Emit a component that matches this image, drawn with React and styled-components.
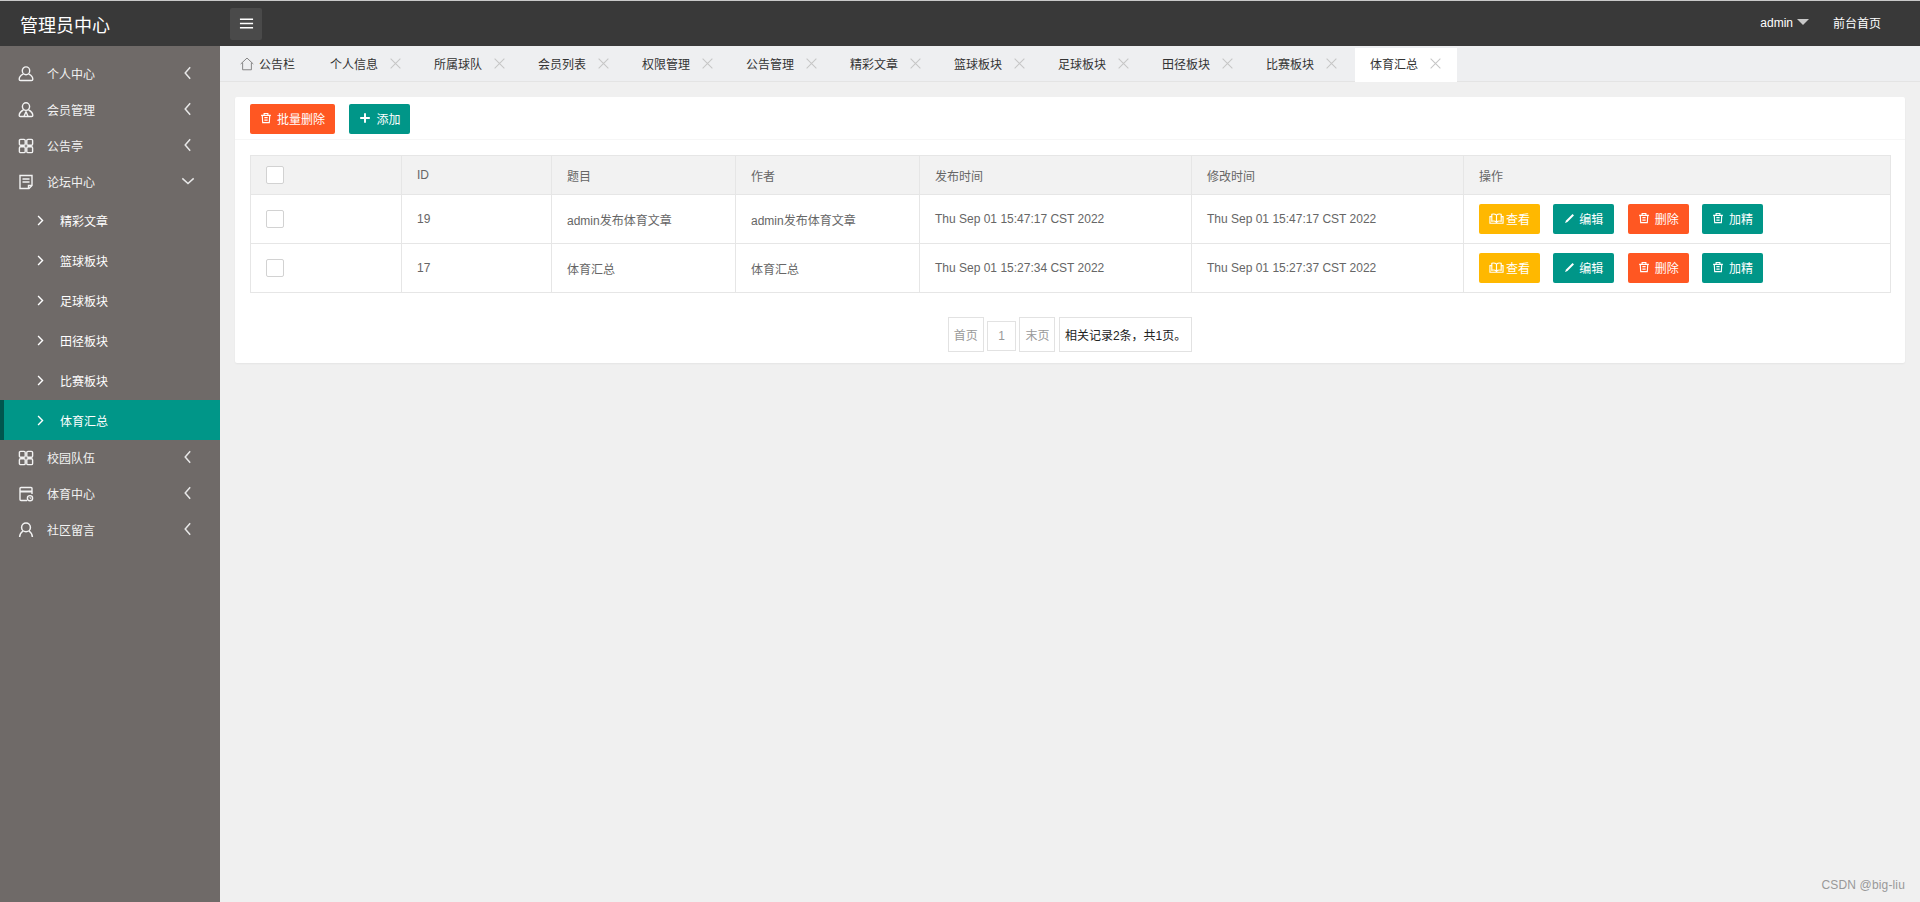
import React from "react";
import styled, { createGlobalStyle } from "styled-components";

const GlobalStyle = createGlobalStyle`
  html, body { margin: 0; padding: 0; height: 100%; overflow: hidden; }
  body {
    font-family: "Liberation Sans", "Noto Sans CJK SC", sans-serif;
    font-size: 12px;
    background: #f0f0f0;
  }
  * { box-sizing: border-box; }
`;

const Svg = ({ size = 16, children, stroke = "currentColor", width = 1.3 }) => (
  <svg width={size} height={size} viewBox="0 0 16 16" fill="none" stroke={stroke} strokeWidth={width} style={{ display: "block", flex: "none" }}>
    {children}
  </svg>
);

const UserIcon = () => (
  <Svg width={1.4}>
    <ellipse cx="8" cy="4.8" rx="3.7" ry="3.9" />
    <path d="M5.3 8.2C3 9.2 1.200 10.800 1.200 13.200c0 .9.5 1.300 1.300 1.300h11c.8 0 1.300-.4 1.300-1.300 0-2.400-1.800-4-4.100-5" />
  </Svg>
);
const MemberIcon = () => (
  <Svg width={1.4}>
    <ellipse cx="8" cy="4.6" rx="3.6" ry="3.8" />
    <path d="M5.4 8C3 9.200 1.200 10.800 1.200 13.400c0 .7.4 1.100 1.100 1.100h11.400c.7 0 1.100-.4 1.100-1.100 0-2.600-1.800-4.200-4.200-5.400" />
    <path d="M8 9.600 6 14.400M8 9.600l2 4.800" />
  </Svg>
);
const GridIcon = () => (
  <Svg width={1.4}>
    <rect x="1.400" y="1.400" width="5.800" height="5.800" rx="1.200" />
    <rect x="8.800" y="1.400" width="5.800" height="5.800" rx="1.200" />
    <rect x="1.400" y="8.800" width="5.800" height="5.800" rx="1.200" />
    <rect x="8.800" y="8.800" width="5.800" height="5.800" rx="1.200" />
  </Svg>
);
const NoteIcon = () => (
  <Svg width={1.4}>
    <path d="M2 1.500h12v10l-3 3H2z" />
    <path d="M4.500 5h7M4.500 8h7M10.500 14.500v-3h3.500" />
  </Svg>
);
const CalcIcon = () => (
  <Svg width={1.4}>
    <path d="M14 8V2.500a1 1 0 0 0-1-1H3a1 1 0 0 0-1 1v11a1 1 0 0 0 1 1h6" />
    <path d="M2 5.500h12" strokeWidth="2" />
    <circle cx="12" cy="12.200" r="2.600" />
    <path d="M12 10.900v1.400h1.200" strokeWidth=".9" />
  </Svg>
);
const FriendIcon = () => (
  <Svg width={1.5}>
    <ellipse cx="8" cy="5.400" rx="4.400" ry="4.300" />
    <path d="M5 9C3 10.400 1.800 12.400 1.600 15M11 9c2 1.400 3.200 3.400 3.400 6" />
  </Svg>
);
const ChevronLeft = () => (
  <Svg size={14} width={1.7}>
    <path d="M10.500 1.500 4.800 8l5.700 6.500" />
  </Svg>
);
const ChevronDown = () => (
  <Svg size={14} width={1.7}>
    <path d="M1.500 5 8 10.800 14.500 5" />
  </Svg>
);
const ChevronRight = () => (
  <Svg size={13} width={1.7}>
    <path d="M5 2.500 10.500 8 5 13.500" />
  </Svg>
);
const CloseIcon = () => (
  <Svg size={13} width={1.3}>
    <path d="M2 2l12 12M14 2 2 14" />
  </Svg>
);
const HomeIcon = () => (
  <Svg size={14} width={1}>
    <path d="M.8 8 8 1.200 15.200 8M3 6.600v8h10v-8" />
  </Svg>
);
const TrashIcon = () => (
  <Svg size={12} width={1.5}>
    <path d="M1.500 4.500h13M5.500 4.500v-2.500h5v2.500M3 4.500l.6 9.700h8.800l.6-9.700M5.800 7.500h4.400M5.800 10.800h4.400" />
  </Svg>
);
const BookIcon = () => (
  <Svg size={15} width={1.2}>
    <path d="M8 4.500C6.500 3 4.500 3 3 3.500V11c1.500-.5 3.500-.5 5 1 1.500-1.500 3.500-1.500 5-1V3.500C11.500 3 9.500 3 8 4.500zM8 4.500V12M3 6H1v7h14V6h-2" />
  </Svg>
);
const PenIcon = () => (
  <Svg size={11} width={0}>
    <path d="M12.500 1.500l2 2L5 13l-3.500 1.500L3 11z" fill="currentColor" stroke="none" />
  </Svg>
);
const PlusIcon = () => (
  <Svg size={14} width={2.2}>
    <path d="M8 2.500v11M2.500 8h11" />
  </Svg>
);

const Page = styled.div`
  height: 100vh;
  display: flex;
  flex-direction: column;
  border-top: 1px solid #c9c9c9;
  position: relative;
`;

const Header = styled.header`
  height: 45px;
  flex: none;
  background: #393939;
  display: flex;
  align-items: center;
  color: #fff;
`;

const Brand = styled.div`
  width: 230px;
  padding-left: 20px;
  font-size: 18px;
  flex: none;
`;

const MenuToggle = styled.button`
  width: 32px;
  height: 32px;
  border: 0;
  border-radius: 2px;
  background: #4a4a4a;
  color: #fff;
  display: flex;
  align-items: center;
  justify-content: center;
  padding: 0;
`;

const HeaderRight = styled.div`
  margin-left: auto;
  display: flex;
  align-items: center;
  padding: 0 39px 2px 0;
`;

const AdminName = styled.span`
  color: #fff;
`;

const Caret = styled.span`
  width: 0;
  height: 0;
  margin: -2px 0 0 4px;
  border-style: solid;
  border-width: 6px 6px 0;
  border-color: #c8c8c8 transparent transparent;
`;

const HomeLink = styled.span`
  margin-left: 24px;
  color: #fff;
`;

const Body = styled.div`
  flex: 1;
  display: flex;
  min-height: 0;
`;

const Sidebar = styled.nav`
  width: 220px;
  flex: none;
  background: #6f6a68;
  padding-top: 10px;
  color: #f0f0f0;
`;

const TopItem = styled.div`
  height: 36px;
  display: flex;
  align-items: center;
  padding-left: 18px;
  color: #f2f2f2;
  span {
    margin-left: 13px;
    width: 134px;
    padding-bottom: 2px;
  }
`;

const ItemArrow = styled.div`
  color: #e8e8e8;
  margin-top: -2px;
`;

const SubItem = styled.div`
  height: 40px;
  display: flex;
  align-items: center;
  padding-left: ${p => (p.$active ? "30px" : "34px")};
  color: #fff;
  background: ${p => (p.$active ? "#009688" : "transparent")};
  border-left: ${p => (p.$active ? "4px solid #00564e" : "none")};
  span {
    margin-left: 13px;
  }
`;

const Main = styled.main`
  flex: 1;
  min-width: 0;
  display: flex;
  flex-direction: column;
`;

const TabBar = styled.div`
  height: 36px;
  flex: none;
  background: #eeeff1;
  border-bottom: 1px solid #e4e4e4;
  display: flex;
  padding: 2px 0 0 8px;
  color: #333;
`;

const Tab = styled.div`
  height: 34px;
  width: ${p => (p.$home ? "85px" : "102px")};
  display: flex;
  align-items: center;
  padding: 0 0 3px ${p => (p.$home ? "12px" : "15px")};
  margin-right: 2px;
  background: ${p => (p.$active ? "#fff" : "transparent")};
`;

const TabClose = styled.span`
  margin-left: 11px;
  color: #c6c6c6;
`;

const TabHome = styled.span`
  margin-right: 5px;
  svg { color: #777; }
`;

const Content = styled.div`
  padding: 15px;
`;

const Card = styled.section`
  background: #fff;
  border-radius: 2px;
  box-shadow: 0 1px 2px rgba(0, 0, 0, 0.05);
  padding: 0 15px 11px;
`;

const Toolbar = styled.div`
  height: 43px;
  margin: 0 -15px;
  padding: 7px 15px 0;
  border-bottom: 1px solid #f6f6f6;
  display: flex;
  gap: 14px;
`;

const Button = styled.button`
  height: 30px;
  width: ${p => p.$width || 61}px;
  border: 0;
  border-radius: 2px;
  padding: 0 0 2px;
  color: #fff;
  font: inherit;
  display: inline-flex;
  align-items: center;
  justify-content: center;
  gap: ${p => p.$gap || 5}px;
  background: ${p => ({ red: "#ff5722", green: "#009688", yellow: "#ffb800" }[p.$tone])};
`;

const Table = styled.table`
  margin-top: 15px;
  width: 1640px;
  table-layout: fixed;
  border-collapse: collapse;
  border: 1px solid #e6e6e6;
  color: #666;
`;

const Th = styled.th`
  height: 39px;
  padding: 0 15px;
  text-align: left;
  font-weight: 400;
  background: #f2f2f2;
  border: 1px solid #e6e6e6;
`;

const Td = styled.td`
  height: 49px;
  padding: 0 15px;
  border: 1px solid #e6e6e6;
`;

const CheckBox = styled.div`
  width: 18px;
  height: 18px;
  background: #fff;
  border: 1px solid #d2d2d2;
  border-radius: 2px;
`;

const Actions = styled.div`
  display: flex;
  gap: 13.33px;
`;

const Pagination = styled.div`
  margin-top: 24px;
  display: flex;
  justify-content: center;
  align-items: flex-start;
  gap: 3.5px;
`;

const PageBox = styled.div`
  height: ${p => (p.$small ? 30 : 35)}px;
  padding: 0 ${p => (p.$small ? 10 : 5)}px;
  margin-top: ${p => (p.$small ? "4px" : 0)};
  display: flex;
  align-items: center;
  border: 1px solid #e2e2e2;
  color: ${p => (p.$strong ? "#222" : "#999")};
  background: #fff;
`;

const Watermark = styled.div`
  position: absolute;
  right: 15px;
  bottom: 10px;
  color: #999;
  font-size: 12px;
  letter-spacing: .15px;
`;

const menuTop = [
  { label: "个人中心", icon: <UserIcon /> },
  { label: "会员管理", icon: <MemberIcon /> },
  { label: "公告亭", icon: <GridIcon /> },
];
const subItems = ["精彩文章", "篮球板块", "足球板块", "田径板块", "比赛板块", "体育汇总"];
const menuBottom = [
  { label: "校园队伍", icon: <GridIcon /> },
  { label: "体育中心", icon: <CalcIcon /> },
  { label: "社区留言", icon: <FriendIcon /> },
];
const tabs = ["个人信息", "所属球队", "会员列表", "权限管理", "公告管理", "精彩文章", "篮球板块", "足球板块", "田径板块", "比赛板块", "体育汇总"];
const rows = [
  { id: 19, title: "admin发布体育文章", author: "admin发布体育文章", created: "Thu Sep 01 15:47:17 CST 2022", updated: "Thu Sep 01 15:47:17 CST 2022" },
  { id: 17, title: "体育汇总", author: "体育汇总", created: "Thu Sep 01 15:27:34 CST 2022", updated: "Thu Sep 01 15:27:37 CST 2022" },
];
const colWidths = [151, 150, 184, 184, 272, 272, 427];

const MenuRow = ({ item, open }) => (
  <TopItem>
    {item.icon}
    <span>{item.label}</span>
    <ItemArrow>{open ? <ChevronDown /> : <ChevronLeft />}</ItemArrow>
  </TopItem>
);

export default function App() {
  return (
    <Page>
      <GlobalStyle />
      <Header>
        <Brand>管理员中心</Brand>
        <MenuToggle>
          <Svg size={15} width={1.5}>
            <path d="M1 3.500h14M1 8h14M1 12.500h14" />
          </Svg>
        </MenuToggle>
        <HeaderRight>
          <AdminName>admin</AdminName>
          <Caret />
          <HomeLink>前台首页</HomeLink>
        </HeaderRight>
      </Header>
      <Body>
        <Sidebar>
          {menuTop.map(item => <MenuRow key={item.label} item={item} />)}
          <MenuRow item={{ label: "论坛中心", icon: <NoteIcon /> }} open />
          {subItems.map((label, i) => (
            <SubItem key={label} $active={i === subItems.length - 1}>
              <ChevronRight />
              <span>{label}</span>
            </SubItem>
          ))}
          {menuBottom.map(item => <MenuRow key={item.label} item={item} />)}
        </Sidebar>
        <Main>
          <TabBar>
            <Tab $home>
              <TabHome><HomeIcon /></TabHome>
              公告栏
            </Tab>
            {tabs.map((label, i) => (
              <Tab key={label} $active={i === tabs.length - 1}>
                {label}
                <TabClose><CloseIcon /></TabClose>
              </Tab>
            ))}
          </TabBar>
          <Content>
            <Card>
              <Toolbar>
                <Button $tone="red" $width={85}><TrashIcon />批量删除</Button>
                <Button $tone="green" $gap={4}><PlusIcon />添加</Button>
              </Toolbar>
              <Table>
                <colgroup>
                  {colWidths.map((w, i) => <col key={i} width={w} />)}
                </colgroup>
                <thead>
                  <tr>
                    <Th><CheckBox /></Th>
                    <Th>ID</Th>
                    <Th>题目</Th>
                    <Th>作者</Th>
                    <Th>发布时间</Th>
                    <Th>修改时间</Th>
                    <Th>操作</Th>
                  </tr>
                </thead>
                <tbody>
                  {rows.map(row => (
                    <tr key={row.id}>
                      <Td><CheckBox /></Td>
                      <Td>{row.id}</Td>
                      <Td>{row.title}</Td>
                      <Td>{row.author}</Td>
                      <Td>{row.created}</Td>
                      <Td>{row.updated}</Td>
                      <Td>
                        <Actions>
                          <Button $tone="yellow" $gap={2}><BookIcon />查看</Button>
                          <Button $tone="green" $gap={4}><PenIcon />编辑</Button>
                          <Button $tone="red"><TrashIcon />删除</Button>
                          <Button $tone="green"><TrashIcon />加精</Button>
                        </Actions>
                      </Td>
                    </tr>
                  ))}
                </tbody>
              </Table>
              <Pagination>
                <PageBox>首页</PageBox>
                <PageBox $small>1</PageBox>
                <PageBox>末页</PageBox>
                <PageBox $strong>相关记录2条，共1页。</PageBox>
              </Pagination>
            </Card>
          </Content>
        </Main>
      </Body>
      <Watermark>CSDN @big-liu</Watermark>
    </Page>
  );
}
